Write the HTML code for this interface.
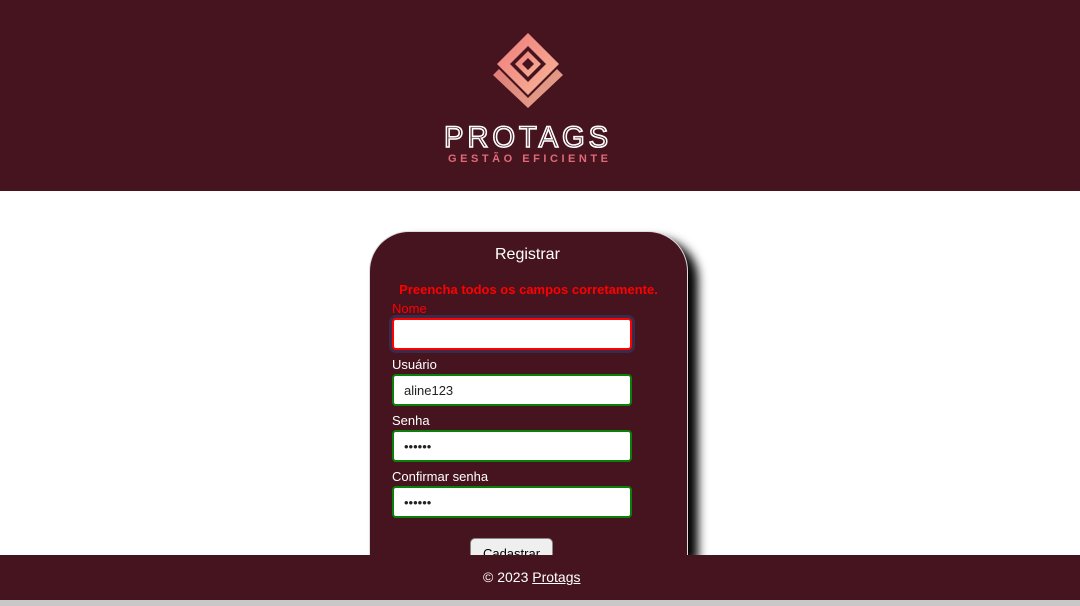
<!DOCTYPE html>
<html><head><meta charset="utf-8"><style>
*{margin:0;padding:0;box-sizing:border-box}
html,body{width:1080px;height:606px;overflow:hidden}
body{background:#fff;font-family:"Liberation Sans",Arial,sans-serif;position:relative}
.hdr{position:absolute;left:0;top:0;width:1080px;height:191px;background:#46141e}
.card{position:absolute;left:369px;top:231px;width:319px;height:324px;background:#46141e;border-radius:40px 40px 0 0;border:1px solid #ddd;border-bottom:none;box-shadow:10px 8px 10px #000}
.card h2{font-weight:normal;font-size:16px;color:#fff;text-align:center;margin-top:14px;padding-left:197px;padding-right:0;text-align:left}
.err{position:absolute;left:0;width:100%;top:50px;text-align:center;color:#f00;font-weight:bold;font-size:13px}
.lab{position:absolute;left:22px;font-size:13px;color:#fff}
.inp{position:absolute;left:22px;width:240px;height:32px;background:#fff;border:2px solid #0a7f0a;border-radius:4px;font-size:13px;padding:7px 0 0 10px;color:#222}
.btn{position:absolute;left:100px;top:306px;width:83px;height:30px;background:#efefef;border:1px solid #888;border-radius:5px;font-size:13px;text-align:center;padding-top:7px;color:#000}
.ftr{position:absolute;left:0;top:555px;width:1080px;height:45px;background:#46141e;color:#fff;font-size:14px;padding-top:14px}
.ftr span{position:absolute;left:483px}
.ftr u{color:#fff}
.gray{position:absolute;left:0;top:600px;width:1080px;height:6px;background:#c8c8c8}
</style></head><body>
<div class="hdr">
<svg width="1080" height="191" style="position:absolute;left:0;top:0">
<defs><linearGradient id="g" x1="0" y1="0" x2="1" y2="1"><stop offset="0" stop-color="#ef7a7a"/><stop offset="1" stop-color="#f6b89a"/></linearGradient></defs>
<polygon points="493,75 528,40 563,75 528,108" fill="url(#g)" opacity="0.9"/>
<polygon points="528,30 562,64 528,98 494,64" fill="#46141e"/>
<polygon points="528,33 559,64 528,95 497,64" fill="url(#g)"/>
<polygon points="528,46 546,64 528,82 510,64" fill="#46141e"/>
<polygon points="528,51 541,64 528,77 515,64" fill="url(#g)"/>
<polygon points="528,58 534,64 528,70 522,64" fill="#46141e"/>
<text x="528" y="147" text-anchor="middle" font-family="Liberation Sans" font-size="30" fill="none" stroke="#fff" stroke-width="1.6" letter-spacing="4" textLength="168" lengthAdjust="spacingAndGlyphs">PROTAGS</text>
<text x="528" y="162" text-anchor="middle" font-family="Liberation Sans" font-size="11" font-weight="bold" fill="#e06a78" textLength="160" lengthAdjust="spacing">GESTÃO EFICIENTE</text>
</svg>
</div>
<div class="card">
<h2 style="padding-left:125px">Registrar</h2>
<div class="err">Preencha todos os campos corretamente.</div>
<div class="lab" style="top:69px;color:#f00">Nome</div>
<div class="inp" style="top:86px;border-color:#f00;box-shadow:0 0 0 3px #3c2a4a"></div>
<div class="lab" style="top:125px">Usuário</div>
<div class="inp" style="top:142px">aline123</div>
<div class="lab" style="top:181px">Senha</div>
<div class="inp" style="top:198px">••••••</div>
<div class="lab" style="top:237px">Confirmar senha</div>
<div class="inp" style="top:254px">••••••</div>
<div class="btn">Cadastrar</div>
</div>
<div class="ftr"><span>© 2023 <u>Protags</u></span></div>
<div class="gray"></div>
</body></html>
